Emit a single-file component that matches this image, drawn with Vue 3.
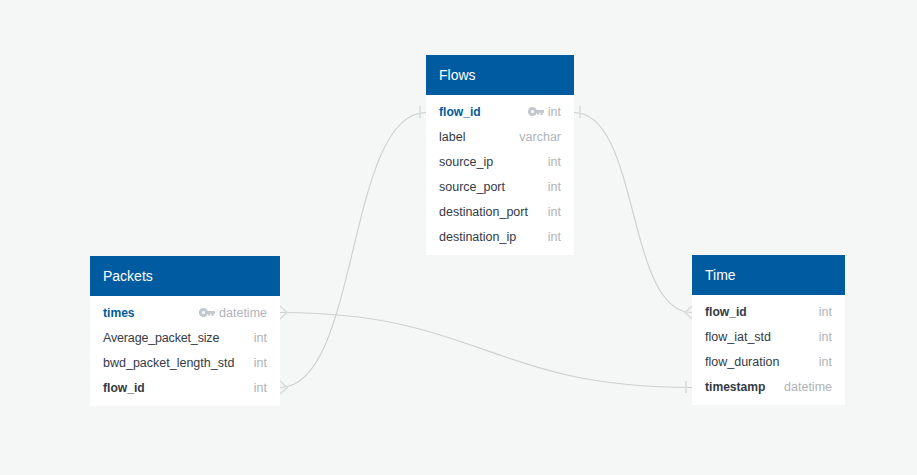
<script setup>
const tables = [
  { name: 'Flows', cls: 'flows', rows: [
    { n: 'flow_id', t: 'int', pk: true },
    { n: 'label', t: 'varchar' },
    { n: 'source_ip', t: 'int' },
    { n: 'source_port', t: 'int' },
    { n: 'destination_port', t: 'int' },
    { n: 'destination_ip', t: 'int' },
  ]},
  { name: 'Packets', cls: 'packets', rows: [
    { n: 'times', t: 'datetime', pk: true },
    { n: 'Average_packet_size', t: 'int', tight: true },
    { n: 'bwd_packet_length_std', t: 'int' },
    { n: 'flow_id', t: 'int', fk: true },
  ]},
  { name: 'Time', cls: 'time', rows: [
    { n: 'flow_id', t: 'int', fk: true },
    { n: 'flow_iat_std', t: 'int' },
    { n: 'flow_duration', t: 'int' },
    { n: 'timestamp', t: 'datetime', fk: true },
  ]},
]
</script>

<template>
  <div class="canvas">
    <svg class="edges" width="917" height="475" viewBox="0 0 917 475">
      <g fill="none" stroke="#cdd0cf" stroke-width="1.1">
        <path d="M280 387.5 C360 387.5 346 112.5 426 112.5" />
        <path d="M574 112.5 C640 112.5 626 312.5 692 312.5" />
        <path d="M280 312.5 C480 312.5 490 387.5 692 387.5" />
      </g>
      <g fill="none" stroke="#d9dcdb" stroke-width="1.7">
        <path d="M420 106 V118 M580 106 V118 M686 381 V393" />
        <path d="M280 306 L287 312.5 L280 319 M280 381 L287 387.5 L280 394 M692 306 L685 312.5 L692 319" />
      </g>
    </svg>
    <section v-for="t in tables" :key="t.name" class="table" :class="t.cls">
      <header class="head">{{ t.name }}</header>
      <div class="body">
        <div v-for="r in t.rows" :key="r.n" class="row">
          <span class="name" :class="{ pk: r.pk, fk: r.fk, tight: r.tight }">{{ r.n }}</span>
          <svg v-if="r.pk" class="key" width="16" height="9" viewBox="0 0 16 9">
            <path fill="#c3c8ce" fill-rule="evenodd" d="M4.5 0a4.5 4.5 0 0 1 4.2 3H16v2.8h-1.4V8h-2.2V5.8h-1.2v1.6H9V5.9h-.3A4.5 4.5 0 1 1 4.5 0Zm0 3a1.5 1.5 0 1 0 0 3 1.5 1.5 0 0 0 0-3Z" />
          </svg>
          <span class="type">{{ r.t }}</span>
        </div>
      </div>
    </section>
  </div>
</template>

<style scoped>
.canvas {
  position: relative;
  width: 917px;
  height: 475px;
  overflow: hidden;
  background: #f5f7f6;
  font-family: "Liberation Sans", Arial, sans-serif;
}
.edges { position: absolute; left: 0; top: 0; }
.table { position: absolute; background: #fff; }
.flows { left: 426px; top: 55px; width: 148px; }
.packets { left: 90px; top: 256px; width: 190px; }
.time { left: 692px; top: 255px; width: 153px; }
.head {
  height: 40px;
  line-height: 40px;
  padding: 0 13px;
  background: #005ba1;
  color: #fff;
  font-size: 14px;
}
.body { padding: 5px 0; }
.row {
  display: flex;
  align-items: center;
  box-sizing: border-box;
  height: 25px;
  padding: 0 13px 2px;
  font-size: 12.5px;
}
.name { flex: 1; color: #333a45; white-space: nowrap; }
.name.pk { color: #005ba1; font-weight: 700; font-size: 12.1px; }
.name.fk { font-weight: 700; font-size: 12.1px; }
.name.tight { letter-spacing: -0.16px; }
.key { margin-right: 4px; }
.type { color: #b0b3b8; white-space: nowrap; }
</style>
